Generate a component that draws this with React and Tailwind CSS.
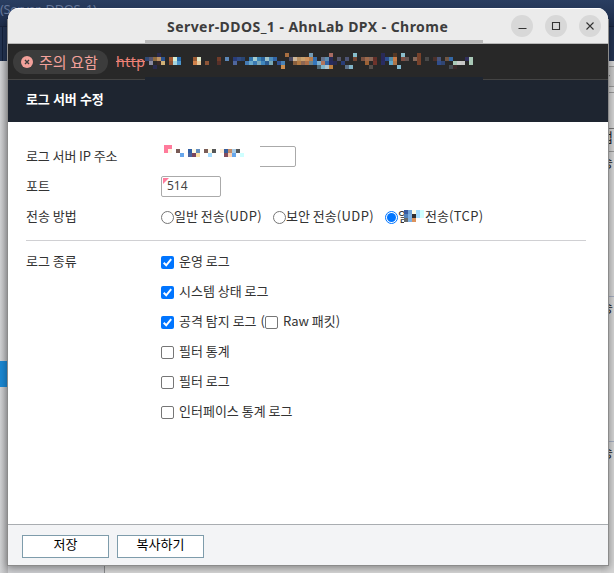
import { useState } from 'react';

// [column, row, color] on a 4px grid
const urlCells = [
  [3, 0, '#292a50'], [35, 0, '#a86e40'], [41, 0, '#759cb6'], [46, 0, '#a96c63'], [52, 0, '#86bdca'],
  [59, 0, '#292b57'], [62, 0, '#543724'], [64, 0, '#8cbecb'], [68, 0, '#77422b'],
  [0, 1, '#304873'], [1, 1, '#555570'], [2, 1, '#8f6b40'], [3, 1, '#bc9364'], [4, 1, '#2b518d'],
  [6, 1, '#a65b34'], [7, 1, '#d8efd5'], [8, 1, '#276bad'], [12, 1, '#9c5b34'], [13, 1, '#dfe8c9'],
  [18, 1, '#713c29'], [20, 1, '#5c87b7'], [22, 1, '#293c79'], [23, 1, '#314c84'], [24, 1, '#294674'],
  [26, 1, '#3275ad'], [27, 1, '#a5cdd0'], [28, 1, '#3d88b9'], [29, 1, '#2c659e'], [30, 1, '#a0c5cb'],
  [31, 1, '#4c8dbc'], [32, 1, '#3265a6'], [36, 1, '#4d4d66'], [37, 1, '#cdb699'], [38, 1, '#b79165'],
  [39, 1, '#c9a06d'], [40, 1, '#cf925d'], [41, 1, '#b77d4d'], [42, 1, '#376eac'], [44, 1, '#66738d'],
  [45, 1, '#5e8db0'], [46, 1, '#292b57'], [48, 1, '#54566b'], [50, 1, '#4c5373'], [52, 1, '#764733'],
  [54, 1, '#7b5140'], [55, 1, '#9d6a4c'], [56, 1, '#886758'], [57, 1, '#632f29'], [59, 1, '#29285b'],
  [60, 1, '#2b4e91'], [61, 1, '#518ba5'], [62, 1, '#c77b48'], [64, 1, '#805044'], [65, 1, '#625351'],
  [67, 1, '#85685a'], [68, 1, '#77422b'], [70, 1, '#484848'], [72, 1, '#4b302b'], [73, 1, '#495579'],
  [75, 1, '#705644'], [76, 1, '#3368a6'], [80, 1, '#302e5b'], [81, 1, '#a8c8b6'],
  [1, 2, '#8b8ba1'], [3, 2, '#3b2828'], [4, 2, '#cfb077'], [6, 2, '#8e5031'], [7, 2, '#a5d5df'],
  [8, 2, '#4c96cc'], [12, 2, '#d1814a'], [13, 2, '#e4c79a'], [15, 2, '#8e5538'], [18, 2, '#573029'],
  [22, 2, '#4f669d'], [25, 2, '#447bb4'], [26, 2, '#68a8ca'], [27, 2, '#3a79b2'], [28, 2, '#7ba8ba'],
  [29, 2, '#3f86bd'], [30, 2, '#2c5b91'], [31, 2, '#79a8b5'], [33, 2, '#315393'], [34, 2, '#4a83b4'],
  [37, 2, '#885f3e'], [38, 2, '#b27a42'], [39, 2, '#8d6753'], [40, 2, '#ae704a'], [41, 2, '#6d858d'],
  [42, 2, '#3477bd'], [43, 2, '#7fb1cf'], [44, 2, '#b1755b'], [45, 2, '#2e64a7'], [46, 2, '#282c5e'],
  [47, 2, '#282a4e'], [49, 2, '#293d77'], [55, 2, '#9d6236'], [57, 2, '#6e332b'], [59, 2, '#292c61'],
  [61, 2, '#62a7c9'], [62, 2, '#ad7548'], [68, 2, '#77422b'], [73, 2, '#304d8c'], [74, 2, '#304571'],
  [77, 2, '#a9c9b8'], [78, 2, '#cbcbcb'], [79, 2, '#c6c6c6'], [81, 2, '#a8c8b6'],
  [2, 3, '#292a50'], [34, 3, '#cc8d4d'], [43, 3, '#536c78'], [44, 3, '#7fb5cb'], [45, 3, '#adc3cd'],
  [46, 3, '#be803f'], [50, 3, '#5b718b'], [51, 3, '#82b5c8'], [56, 3, '#554e4a'], [63, 3, '#82b9cf'],
  [76, 3, '#434a51'], [77, 3, '#3d292b'],
];

const ipCells = [
  [0, 0, '#ff7b9c'], [1, 0, '#ff7b9c'], [0, 1, '#ff7b9c'], [1, 1, '#fff8e5'], [3, 1, '#795b56'],
  [6, 1, '#315fa4'], [7, 1, '#fffbe5'], [8, 1, '#668fbe'], [10, 1, '#795c57'], [11, 1, '#fffbe8'],
  [12, 1, '#555759'], [14, 1, '#ffedd6'], [15, 1, '#355d9c'], [16, 1, '#c18a69'], [17, 1, '#a9cce7'],
  [18, 1, '#555759'], [4, 2, '#68a7ec'], [6, 2, '#4d639d'], [7, 2, '#7b455e'], [8, 2, '#ffe3a7'],
  [11, 2, '#a5dcff'], [15, 2, '#844d5d'], [16, 2, '#ffd4b5'], [17, 2, '#68a7ec'], [19, 2, '#cfffff'],
];

const radioCells = [
  [0, 0, '#385ba0'], [1, 0, '#72a3d6'], [2, 0, '#fffbe5'], [3, 0, '#a5dcff'], [4, 0, '#d0ffff'],
  [0, 1, '#5181ba'], [1, 1, '#7eafe1'], [2, 1, '#302c2e'], [3, 1, '#a5dcff'], [4, 1, '#d0ffff'],
  [0, 2, '#65696c'], [1, 2, '#7eafe1'], [2, 2, '#dc925c'],
];

const logTypes = [
  { label: '운영 로그', checked: true },
  { label: '시스템 상태 로그', checked: true },
  { label: '공격 탐지 로그', checked: true, raw: true },
  { label: '필터 통계', checked: false },
  { label: '필터 로그', checked: false },
  { label: '인터페이스 통계 로그', checked: false },
];

function Mosaic({ cells, className }) {
  return (
    <svg className={`absolute overflow-visible ${className}`} shapeRendering="crispEdges">
      {cells.map(([x, y, fill]) => (
        <rect key={`${x}-${y}`} x={x * 4} y={y * 4} width="4" height="4" fill={fill} />
      ))}
    </svg>
  );
}

function Checkbox({ checked, onChange }) {
  return (
    <button
      role="checkbox"
      aria-checked={checked}
      onClick={onChange}
      className={`w-[13px] h-[13px] shrink-0 rounded-[2px] ${checked ? 'bg-[#0075ff]' : 'bg-white border border-[#767676]'}`}
    >
      {checked && (
        <svg viewBox="0 0 13 13" className="w-[13px] h-[13px]">
          <path d="M2.7 6.8 5.2 9.3 10.2 3.2" fill="none" stroke="#fff" strokeWidth="2" />
        </svg>
      )}
    </button>
  );
}

function Radio({ checked, onChange }) {
  return (
    <button
      role="radio"
      aria-checked={checked}
      onClick={onChange}
      className={`flex items-center justify-center w-[13px] h-[13px] shrink-0 mt-[2px] rounded-full border bg-white ${checked ? 'border-[#0075ff]' : 'border-[#767676]'}`}
    >
      {checked && <span className="w-[9px] h-[9px] shrink-0 rounded-full bg-[#0075ff]" />}
    </button>
  );
}

function Backdrop() {
  return (
    <div className="w-full h-full flex flex-col">
      <div className="h-[61px] shrink-0 bg-[#233351] flex flex-col">
        <div className="h-[27px] border-b border-[#17223b] text-[13px] leading-[18px] text-[#65779a] whitespace-nowrap bg-linear-to-b from-[#2a3e61] to-[#1d2c49] tracking-[-0.4px]">
          (Server_DDOS_1)
        </div>
        <div className="flex-1 w-[3px] border-r border-[#14203a]" />
      </div>
      <div className="flex-1 flex">
        <div className="w-[105px] border-r border-[#8b8c8f] bg-[#cfd0d3]">
          <div className="h-[300px] w-2 bg-linear-to-r from-[#d2d3d5] to-[#b5b5b7]" />
          <div className="h-[26px] w-2 bg-[#1b87d2]" />
          <div className="h-[186px] w-2 bg-linear-to-r from-[#d2d3d5] to-[#b5b5b7]" />
        </div>
        <div className="flex-1 bg-[#d8d8d8]" />
        <div className="w-[13px] bg-[#d5d5d5] text-[13px] leading-[14px] text-[#222] overflow-hidden whitespace-nowrap">
          <div className="h-[6px] border-b border-[#999]" />
          <div className="h-[20px] border-b border-[#999] bg-[#c9c9c9] flex items-center">
            <svg viewBox="0 0 10 6" className="w-[10px] h-[6px]"><path d="M1 1 4.5 4.5 8 1" fill="none" stroke="#000" strokeWidth="2" /></svg>
          </div>
          <div className="h-[6px] border-b border-[#999]" />
          <div className="h-[36px] border-b border-[#777]" />
          <div className="h-[23px] border-b border-[#999] pt-[1px]">법</div>
          <div className="h-[145px] border-b border-[#a5adc0] pt-[3px]">송</div>
          <div className="h-[145px] border-b border-[#a5adc0] pt-[3px]">송</div>
          <div className="pt-[3px]">송</div>
        </div>
      </div>
    </div>
  );
}

function TitleBar() {
  return (
    <div className="relative h-[36px] shrink-0 bg-[#ebebeb] border-t border-white flex items-center justify-end pr-[7px] gap-[12px]">
      <div className="absolute left-[159px] top-0 h-[35px] leading-[35px] text-[14px] font-bold text-[#3d3d3d] whitespace-nowrap tracking-[0.45px]">
        Server-DDOS_1 - AhnLab DPX - Chrome
      </div>
      {['M7.5 13.5h8', 'M7.5 7.5h7v7h-7z', 'M7.5 7.5l7 7m0-7-7 7'].map((d) => (
        <button key={d} className="w-[22px] h-[22px] mt-[-1px] rounded-full bg-[#d8d8d8]">
          <svg viewBox="0 0 22 22" className="w-[22px] h-[22px]">
            <path d={d} fill="none" stroke="#333" strokeWidth="1.1" />
          </svg>
        </button>
      ))}
      <div className="absolute left-0 right-0 bottom-0 h-px bg-[#b7b7b7]" />
      <div className="absolute left-[137px] bottom-0 w-[338px] h-[4px] bg-[#b9b9b9]" />
    </div>
  );
}

function AddressBar() {
  return (
    <div className="relative h-[36px] shrink-0 bg-[#282828] border-b border-[#444] flex items-center pl-[5px] text-[#f3a19b]">
      <div className="w-[95px] h-[24px] rounded-full bg-[#3c3c3c] flex items-center pl-[8px] gap-[6px]">
        <svg viewBox="0 0 12 12" className="w-[12px] h-[12px] shrink-0">
          <circle cx="6" cy="6" r="6" fill="#f3a19b" />
          <path d="M4 4l4 4m0-4-4 4" stroke="#3c3c3c" strokeWidth="1.4" />
        </svg>
        <span className="text-[15px] leading-[20px] whitespace-nowrap tracking-[-0.1px]">주의 요함</span>
      </div>
      <span className="ml-[8px] w-[29px] overflow-hidden text-[14px] leading-[20px] tracking-[0.5px] text-[#ee8277] line-through">http</span>
      <div className="absolute left-[137px] bottom-[-1px] w-[338px] h-[3px] bg-[#1e2530]" />
      <Mosaic cells={urlCells} className="left-[137px] top-[9px] w-[328px] h-[16px]" />
    </div>
  );
}

export default function App() {
  const [method, setMethod] = useState(2);
  const [types, setTypes] = useState(logTypes.map((t) => t.checked));
  const [raw, setRaw] = useState(false);

  const toggle = (i) => setTypes((prev) => prev.map((v, idx) => (idx === i ? !v : v)));

  return (
    <div className="relative w-[614px] h-[573px] overflow-hidden font-['Noto_Sans','Noto_Sans_CJK_KR',sans-serif]">
      <Backdrop />
      <div className="absolute left-[7px] top-[19px] w-[602px] h-[547px] border border-t-0 border-[#8b8b8b] shadow-[0_2px_8px_rgba(0,0,0,0.4)]" />
      <div className="absolute left-[8px] top-[8px] w-[600px] h-[557px] rounded-t-[11px] overflow-hidden bg-white flex flex-col">
        <TitleBar />
        <AddressBar />
        <div className="h-[42px] shrink-0 bg-[#1e2530] text-white font-bold text-[13px] leading-[38px] pl-[18px] tracking-[-0.1px]">
          로그 서버 수정
        </div>

        <div className="flex-1 px-[18px] pt-[19px] text-[13px] leading-[30px] text-[#333] font-['Noto_Sans_CJK_KR',sans-serif]">
          <div className="flex h-[30px]">
            <div className="w-[135px] tracking-[-0.1px]">로그 서버 IP 주소</div>
            <div className="relative mt-[5px] w-[135px] h-[21px] border border-[#aaa] rounded-[2px]">
              <div className="absolute left-[-1px] top-[-2px] w-[99px] h-[23px] bg-white" />
              <Mosaic cells={ipCells} className="left-[2px] top-[-2px] w-[80px] h-[12px]" />
            </div>
          </div>
          <div className="flex h-[30px]">
            <div className="w-[135px]">포트</div>
            <div className="relative mt-[5px] w-[60px] h-[21px] border border-[#aaa] rounded-[2px] pl-[5px] text-[12px] leading-[18px] text-[#444] font-['Noto_Sans',sans-serif]">
              514
              <svg viewBox="0 0 6 6" className="absolute left-px top-px w-[6px] h-[6px]"><path d="M0 0h6L0 6z" fill="#ff7b9c" /></svg>
            </div>
          </div>
          <div className="flex h-[30px]">
            <div className="w-[135px] shrink-0">전송 방법</div>
            <div className="w-[112px] flex items-center whitespace-nowrap">
              <Radio checked={method === 0} onChange={() => setMethod(0)} />일반 전송<span className="tracking-[0.4px]">(UDP)</span>
            </div>
            <div className="w-[112px] flex items-center whitespace-nowrap">
              <Radio checked={method === 1} onChange={() => setMethod(1)} />보안 전송<span className="tracking-[0.4px]">(UDP)</span>
            </div>
            <div className="relative flex items-center whitespace-nowrap">
              <Radio checked={method === 2} onChange={() => setMethod(2)} />
              <span className="w-[27px] overflow-hidden">일반</span>전송<span className="tracking-[0.4px]">(TCP)</span>
              <div className="absolute left-[19px] top-[9px] w-[21px] h-[13px] bg-white" />
              <Mosaic cells={radioCells} className="left-[19px] top-[9px] w-[20px] h-[12px]" />
            </div>
          </div>
          <div className="mt-[9px] mb-[5px] h-px w-[560px] bg-[#d0d0d3]" />
          <div className="flex">
            <div className="w-[135px]">로그 종류</div>
            <div>
              {logTypes.map((t, i) => (
                <div key={t.label} className="flex items-center h-[30px] whitespace-nowrap">
                  <span className="mt-[2px] flex"><Checkbox checked={types[i]} onChange={() => toggle(i)} /></span>
                  <span className="ml-[5px]">{t.label}</span>
                  {t.raw && (
                    <>
                      <span className="ml-[4px]">(</span>
                      <span className="mt-[2px] flex"><Checkbox checked={raw} onChange={() => setRaw(!raw)} /></span>
                      <span className="ml-[5px]">Raw 패킷)</span>
                    </>
                  )}
                </div>
              ))}
            </div>
          </div>
        </div>

        <div className="h-[41px] shrink-0 bg-[#f3f4f6] border-t border-[#a9adb1] flex gap-[8px] pl-[14px] pt-[10px] text-[13px] text-black">
          <button className="w-[87px] h-[23px] bg-white border border-[#7e9cab] flex justify-center leading-[17px]">저장</button>
          <button className="w-[87px] h-[23px] bg-white border border-[#7e9cab] flex justify-center leading-[17px]">복사하기</button>
        </div>
      </div>
    </div>
  );
}
